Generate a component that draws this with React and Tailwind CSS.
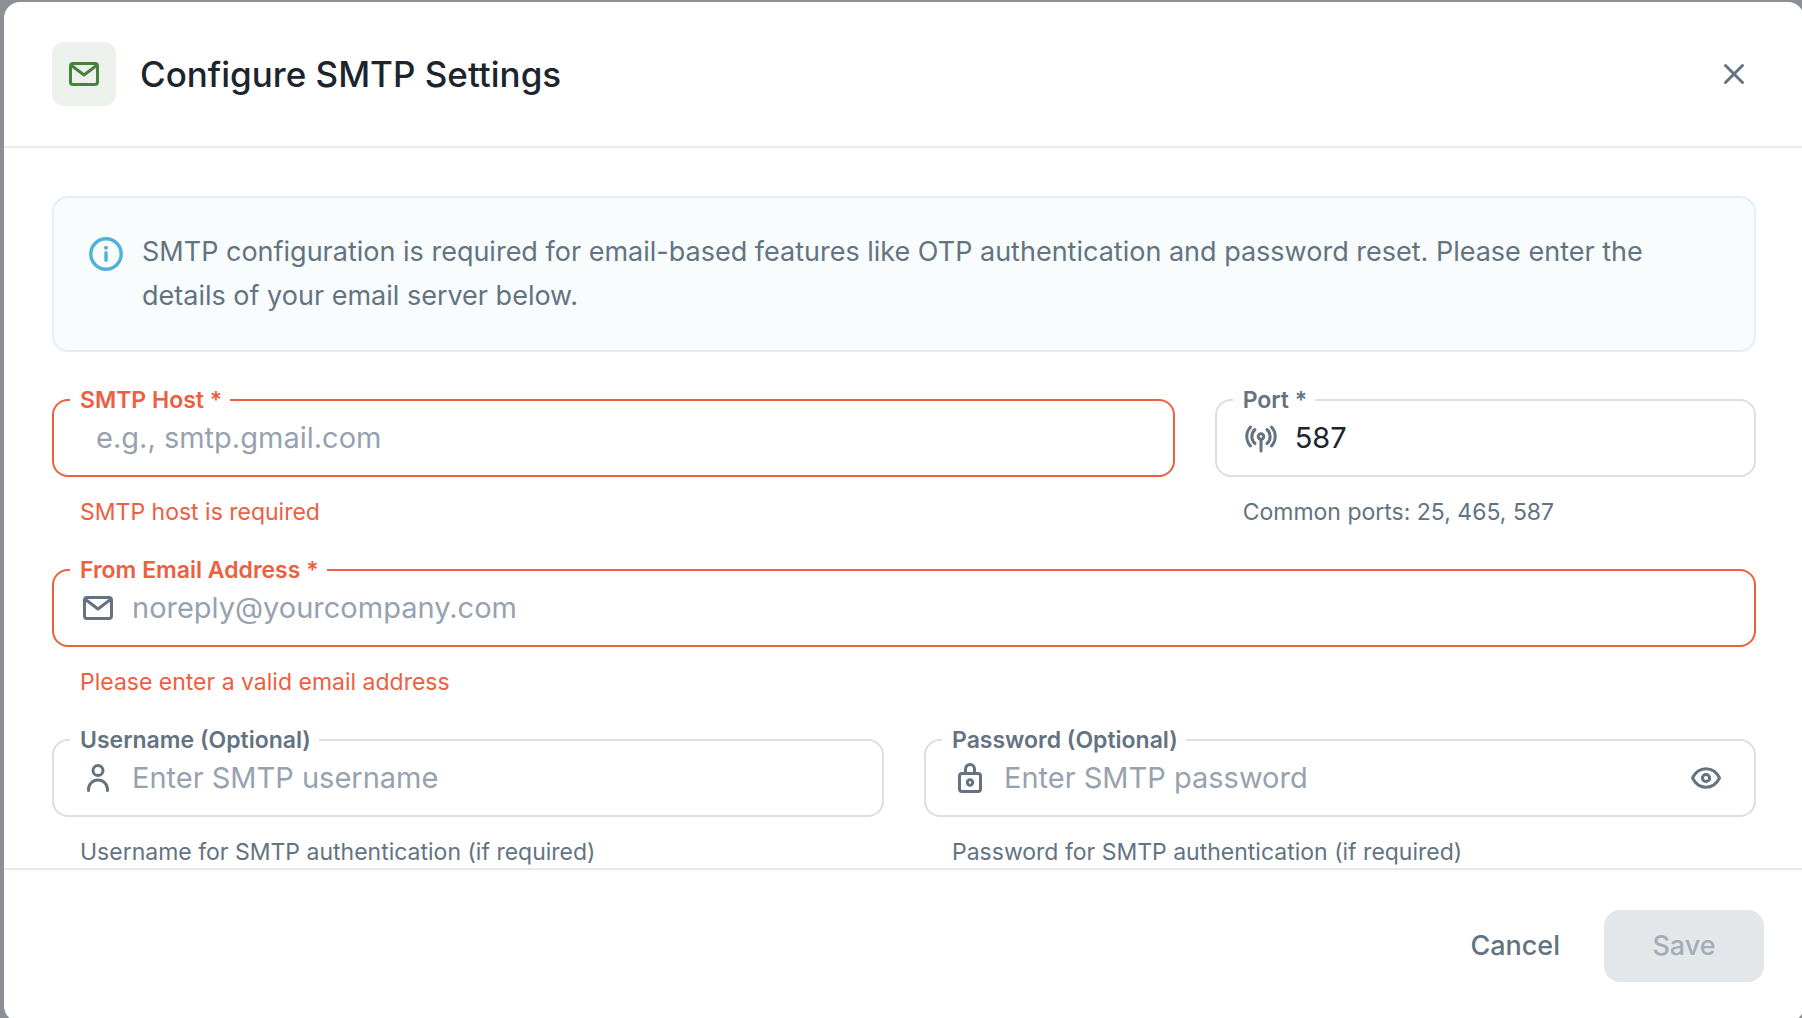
import { useState } from "react";

function MailIcon({ className }) {
  return (
    <svg viewBox="0 0 36 36" fill="none" stroke="currentColor" strokeWidth="3" strokeLinejoin="round" className={className} aria-hidden="true">
      <rect x="4.5" y="7.5" width="27" height="21" rx="2.5" />
      <path d="M5.5 9.5L18 19l12.5-9.5" />
    </svg>
  );
}

function InfoIcon({ className }) {
  return (
    <svg viewBox="0 0 40 40" fill="none" stroke="currentColor" strokeWidth="3.4" strokeLinecap="round" className={className} aria-hidden="true">
      <circle cx="20" cy="20" r="15.2" />
      <path d="M20 18.8v7.4" />
      <circle cx="20" cy="13.8" r="2" fill="currentColor" stroke="none" />
    </svg>
  );
}

function AntennaIcon({ className }) {
  return (
    <svg viewBox="0 0 36 36" fill="none" stroke="currentColor" strokeWidth="3" strokeLinecap="round" className={className} aria-hidden="true">
      <circle cx="18" cy="16.5" r="2.8" />
      <path d="M18 20v11" />
      <path d="M12 23.5a9.3 9.3 0 0 1 0-14M24 23.5a9.3 9.3 0 0 0 0-14" />
      <path d="M7.5 26a14 14 0 0 1 0-19M28.5 26a14 14 0 0 0 0-19" />
    </svg>
  );
}

function UserIcon({ className }) {
  return (
    <svg viewBox="0 0 36 36" fill="none" stroke="currentColor" strokeWidth="3" strokeLinecap="round" className={className} aria-hidden="true">
      <circle cx="18" cy="10.5" r="5" />
      <path d="M8.5 30.5v-1a9.5 9.5 0 0 1 19 0v1" />
    </svg>
  );
}

function LockIcon({ className }) {
  return (
    <svg viewBox="0 0 36 36" fill="none" stroke="currentColor" strokeWidth="3" className={className} aria-hidden="true">
      <rect x="7.5" y="13.5" width="21" height="18" rx="2.5" />
      <path d="M13.500 13.500V9a4.500 4.500 0 0 1 9 0v4.500" />
      <circle cx="18" cy="22.500" r="2.700" />
    </svg>
  );
}

function EyeIcon({ className }) {
  return (
    <svg viewBox="0 0 36 36" fill="none" stroke="currentColor" strokeWidth="3" strokeLinejoin="round" className={className} aria-hidden="true">
      <path d="M4.500 18C7.500 12 12.500 8.800 18 8.800S28.500 12 31.500 18C28.500 24 23.500 27.200 18 27.200S7.500 24 4.500 18z" />
      <circle cx="18" cy="18" r="3.600" />
    </svg>
  );
}

function Field({ id, label, icon: Icon, helper, error, className = "", action, ...input }) {
  const tone = error ? "text-[#ec603f]" : "text-[#637381]";
  const border = error ? "border-[#ec603f]" : "border-[#dcdee0]";
  return (
    <div className={`min-w-0 ${className}`}>
      <fieldset className={`min-w-0 rounded-2xl border-2 px-4 ${border}`}>
        <legend className="pr-2 pl-2.5 text-[23px] leading-6 font-semibold">
          <label htmlFor={id} className={tone}>{label}</label>
        </legend>
        <div className="mb-[11px] flex h-[52px] items-center gap-4 px-2.5">
          {Icon ? <Icon className="size-9 shrink-0 text-[#637381]" /> : <span />}
          <input
            id={id}
            aria-invalid={error}
            aria-describedby={`${id}-helper`}
            className="min-w-0 flex-1 bg-transparent text-[29px] leading-10 text-[#1c252e] outline-none placeholder:text-[#97a2b0] placeholder:opacity-100"
            {...input}
          />
          {action}
        </div>
      </fieldset>
      <p id={`${id}-helper`} className={`mt-4 px-7 text-[23px] leading-[38px] ${tone}`}>{helper}</p>
    </div>
  );
}

export default function App() {
  const [visible, setVisible] = useState(false);
  return (
    <div className="flex h-screen overflow-hidden bg-[#8c8f93] pt-0.5 pl-1 font-['Inter',sans-serif]">
      <form
        role="dialog"
        aria-labelledby="dialog-title"
        noValidate
        onSubmit={(e) => e.preventDefault()}
        className="-mr-0.5 -mb-1 flex min-w-0 flex-1 flex-col overflow-hidden rounded-2xl bg-white"
      >
        <header className="flex items-center gap-6 border-b-2 border-[#e7ecef] px-12 py-10">
          <span className="grid size-16 place-items-center rounded-xl bg-[#ecf1eb] text-[#468239]">
            <MailIcon className="size-9" />
          </span>
          <h1 id="dialog-title" className="flex-1 text-[35px] leading-[48px] font-medium text-[#1c252e]">
            Configure SMTP Settings
          </h1>
          <button type="button" aria-label="Close" className="grid size-11 place-items-center text-[#637381]">
            <svg viewBox="0 0 24 24" fill="none" stroke="currentColor" strokeWidth="3" strokeLinecap="round" className="size-6" aria-hidden="true">
              <path d="M3.500 3.500l17 17M20.500 3.500l-17 17" />
            </svg>
          </button>
        </header>

        <main className="min-h-0 flex-1 overflow-y-auto px-12 pt-12 [scrollbar-width:none]">
          <div className="flex gap-4 rounded-2xl border-2 border-[#dff0f7] bg-[#f8fcfd] p-8">
            <InfoIcon className="mt-1 size-10 shrink-0 text-[#4fb3d9]" />
            <p className="text-[27px] leading-[44px] text-[#637381]">
              SMTP configuration is required for email-based features like OTP authentication and password reset. Please enter the details of your email server below.
            </p>
          </div>

          <div className="mt-9 flex flex-col gap-[27px]">
            <div className="grid grid-cols-3 gap-10">
              <Field id="host" label="SMTP Host *" placeholder="e.g., smtp.gmail.com" helper="SMTP host is required" error className="col-span-2" />
              <Field id="port" label="Port *" icon={AntennaIcon} defaultValue="587" inputMode="numeric" helper="Common ports: 25, 465, 587" />
            </div>
            <Field id="from" type="email" label="From Email Address *" icon={MailIcon} placeholder="noreply@yourcompany.com" helper="Please enter a valid email address" error />
            <div className="grid grid-cols-2 gap-10">
              <Field id="username" label="Username (Optional)" icon={UserIcon} placeholder="Enter SMTP username" helper="Username for SMTP authentication (if required)" />
              <Field
                id="password"
                type={visible ? "text" : "password"}
                label="Password (Optional)"
                icon={LockIcon}
                placeholder="Enter SMTP password"
                helper="Password for SMTP authentication (if required)"
                action={
                  <button type="button" aria-label="Show password" onClick={() => setVisible(!visible)} className="mr-1 shrink-0 text-[#637381]">
                    <EyeIcon className="size-9" />
                  </button>
                }
              />
            </div>
          </div>
        </main>

        <footer className="flex justify-end gap-4 border-t-2 border-[#e7eaec] p-10">
          <button type="button" className="h-[72px] rounded-2xl px-7 text-[27px] font-medium text-[#637381]">
            Cancel
          </button>
          <button type="submit" disabled className="h-[72px] w-40 rounded-2xl bg-[#e3e7ea] text-[27px] font-medium text-[#a3adb9]">
            Save
          </button>
        </footer>
      </form>
    </div>
  );
}
